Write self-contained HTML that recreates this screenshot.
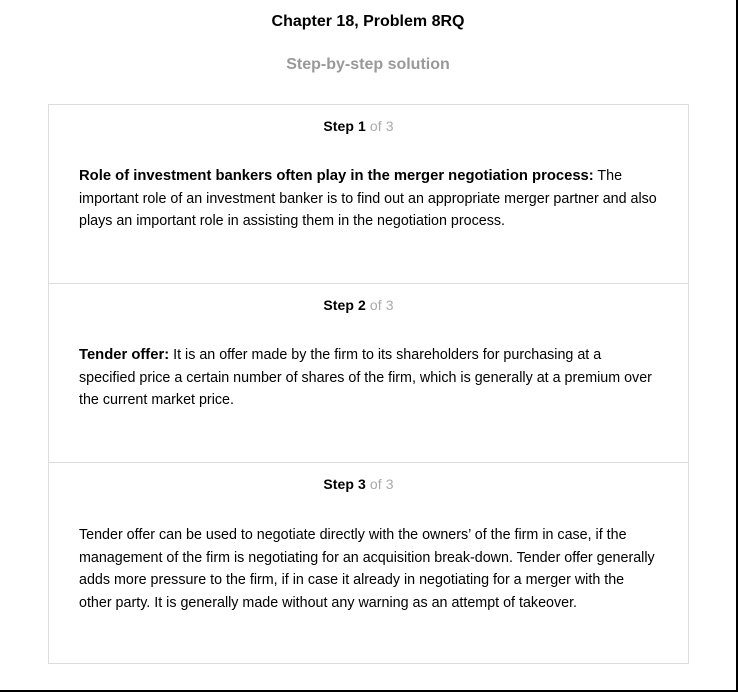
<!DOCTYPE html>
<html><head><style>
html,body{margin:0;padding:0;background:#fff;}
body{width:736px;height:690px;border-right:2px solid #000;border-bottom:2px solid #000;position:relative;font-family:"Liberation Sans",Arial,sans-serif;color:#000;overflow:hidden;}
h1{position:absolute;top:13px;left:0;width:736px;text-align:center;font-size:16px;margin:0;font-weight:bold;}
h2{position:absolute;top:56px;left:0;width:736px;text-align:center;font-size:16px;margin:0;font-weight:bold;color:#999;}
.box{position:absolute;left:48px;top:104px;width:639px;height:558px;border:1px solid #ddd;}
.s{position:absolute;left:0;width:639px;border-bottom:1px solid #ddd;}
.st{position:absolute;top:13px;left:-10px;width:100%;text-align:center;font-size:14px;font-weight:bold;letter-spacing:0.1px;}
.st span{color:#aaa;font-weight:normal;}
.t{position:absolute;left:30px;width:580px;font-size:14.3px;line-height:22.5px;}
.t b{font-size:14.8px;}
</style></head><body>
<h1>Chapter 18, Problem 8RQ</h1>
<h2>Step-by-step solution</h2>
<div class="box">
<div class="s" style="top:0;height:178px">
<div class="st">Step 1 <span>of 3</span></div>
<div class="t" style="top:60px"><b>Role of investment bankers often play in the merger negotiation process:</b> The important role of an investment banker is to find out an appropriate merger partner and also plays an important role in assisting them in the negotiation process.</div>
</div>
<div class="s" style="top:179px;height:178px">
<div class="st">Step 2 <span>of 3</span></div>
<div class="t" style="top:60px"><b>Tender offer:</b> It is an offer made by the firm to its shareholders for purchasing at a specified price a certain number of shares of the firm, which is generally at a premium over the current market price.</div>
</div>
<div class="s" style="top:358px;height:200px;border-bottom:none">
<div class="st">Step 3 <span>of 3</span></div>
<div class="t" style="top:61px">Tender offer can be used to negotiate directly with the owners’ of the firm in case, if the management of the firm is negotiating for an acquisition break-down. Tender offer generally adds more pressure to the firm, if in case it already in negotiating for a merger with the other party. It is generally made without any warning as an attempt of takeover.</div>
</div>
</div>
</body></html>
